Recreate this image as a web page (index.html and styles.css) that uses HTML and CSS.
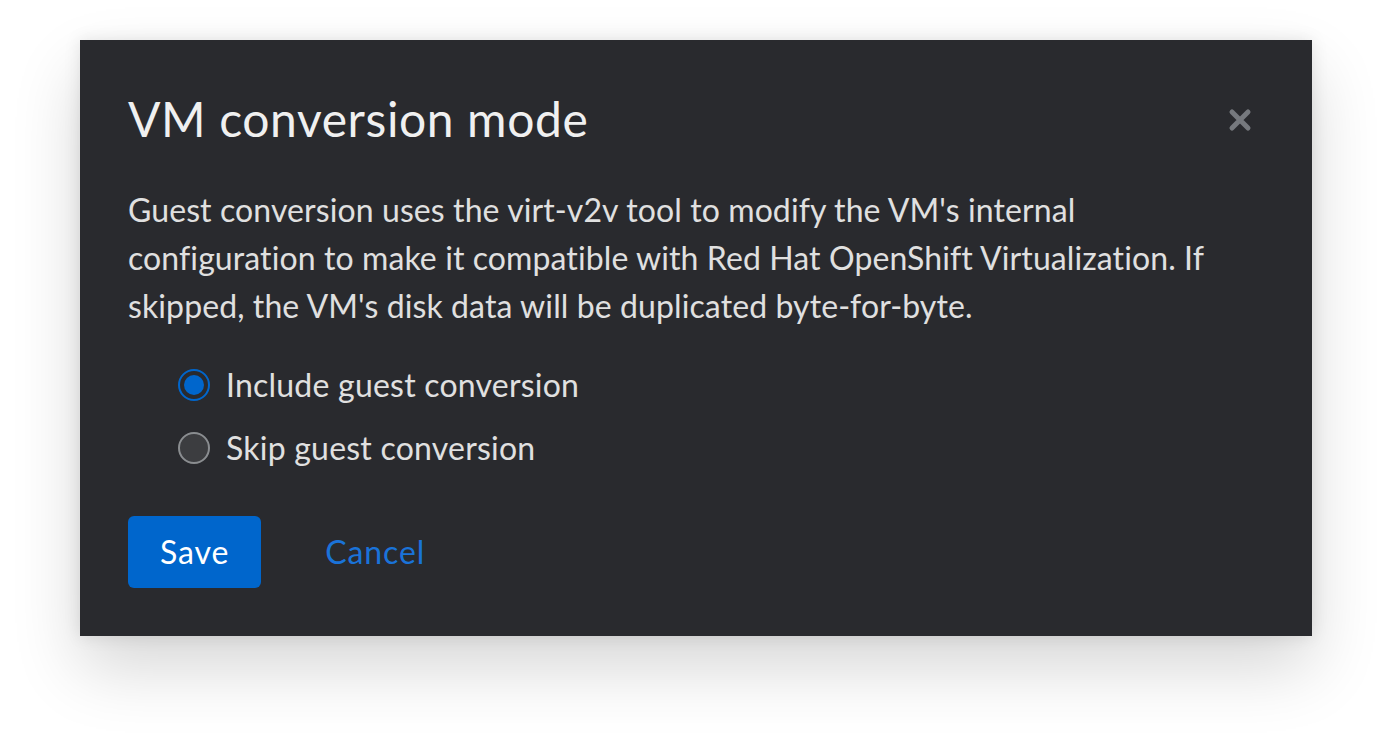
FILE: index.html
```html
<!DOCTYPE html>
<html lang="en">
<head>
<meta charset="utf-8">
<title>VM conversion mode</title>
<link rel="stylesheet" href="styles.css">
</head>
<body>
<div class="page">
  <div class="modal" role="dialog" aria-labelledby="modal-title">
    <button class="close" aria-label="Close">
      <svg viewBox="0 0 24 24" aria-hidden="true">
        <path d="M4 4 L20 20 M20 4 L4 20" stroke="currentColor" stroke-width="5" stroke-linecap="round" fill="none"/>
      </svg>
    </button>
    <h1 class="title" id="modal-title">VM conversion mode</h1>
    <p class="desc">Guest conversion uses the virt-v2v tool to modify the VM's internal configuration to make it compatible with Red Hat OpenShift Virtualization. If skipped, the VM's disk data will be duplicated byte-for-byte.</p>
    <div class="options">
      <label class="radio">
        <span class="radio-input checked"></span>
        <span class="radio-label">Include guest conversion</span>
      </label>
      <label class="radio">
        <span class="radio-input"></span>
        <span class="radio-label">Skip guest conversion</span>
      </label>
    </div>
    <div class="footer">
      <button class="btn btn-primary">Save</button>
      <button class="btn btn-link">Cancel</button>
    </div>
  </div>
</div>
</body>
</html>
```

FILE: styles.css
```css
html, body {
  margin: 0;
  padding: 0;
  background: #ffffff;
}

.page {
  box-sizing: border-box;
  min-height: 756px;
  padding: 40px 80px;
  font-family: "Lato", "Liberation Sans", sans-serif;
}

.modal {
  position: relative;
  width: 1232px;
  box-sizing: border-box;
  padding: 48px;
  background: #292a2e;
  box-shadow: 0 32px 64px 0 rgba(3, 3, 3, 0.16), 0 0 16px 0 rgba(3, 3, 3, 0.1);
  color: #e0e0e0;
}

.close {
  position: absolute;
  top: 68px;
  right: 60px;
  width: 24px;
  height: 24px;
  padding: 0;
  border: 0;
  background: transparent;
  color: #76797e;
  display: flex;
  align-items: center;
  justify-content: center;
}

.close svg {
  width: 24px;
  height: 24px;
  display: block;
}

.title {
  margin: 0;
  font-weight: 400;
  font-size: 48px;
  line-height: 62px;
  letter-spacing: 0.6px;
  color: #f0f0f0;
}

.desc {
  max-width: 1100px;
  margin: 36px 0 0 0;
  font-size: 32px;
  line-height: 48px;
  letter-spacing: 0.1px;
  color: #e0e0e0;
}

.options {
  margin: 31px 0 0 50px;
  display: flex;
  flex-direction: column;
  gap: 15px;
}

.radio {
  display: flex;
  align-items: center;
  gap: 16px;
  height: 48px;
}

.radio-input {
  box-sizing: border-box;
  width: 32px;
  height: 32px;
  border-radius: 50%;
  border: 2px solid #8a8d90;
  background: #3c3d40;
  display: flex;
  align-items: center;
  justify-content: center;
}

.radio-input.checked {
  border-color: #0066cc;
  background: transparent;
}

.radio-input.checked::after {
  content: "";
  width: 20px;
  height: 20px;
  border-radius: 50%;
  background: #0066cc;
}

.radio-label {
  font-size: 32px;
  line-height: 48px;
  letter-spacing: 0.22px;
  color: #e0e0e0;
}

.footer {
  margin-top: 44px;
  display: flex;
  gap: 32px;
}

.btn {
  font-family: "Lato", "Liberation Sans", sans-serif;
  font-size: 32px;
  line-height: 48px;
  letter-spacing: 0.9px;
  padding: 12px 32px;
  border: 0;
  border-radius: 6px;
  cursor: pointer;
}

.btn-primary {
  background: #0066cc;
  color: #ffffff;
}

.btn-link {
  background: transparent;
  color: #1a73d9;
}
```
